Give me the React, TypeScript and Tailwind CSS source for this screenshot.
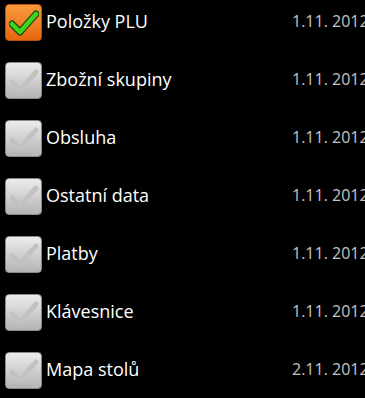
const items = [
  { name: "Položky PLU", date: "1.11. 2012", checked: true },
  { name: "Zbožní skupiny", date: "1.11. 2012", checked: false },
  { name: "Obsluha", date: "1.11. 2012", checked: false },
  { name: "Ostatní data", date: "1.11. 2012", checked: false },
  { name: "Platby", date: "1.11. 2012", checked: false },
  { name: "Klávesnice", date: "1.11. 2012", checked: false },
  { name: "Mapa stolů", date: "2.11. 2012", checked: false },
]

function CheckBox({ checked }: { checked: boolean }) {
  if (checked) {
    return (
      <div className="w-[37px] h-[37px] rounded-[4px] bg-gradient-to-b from-[#f79a3c] to-[#e8650c] border border-[#b8520c] flex items-center justify-center shrink-0">
        <svg width="30" height="26" viewBox="0 0 30 26">
          <path d="M3 14 L11 22 L27 4" fill="none" stroke="#1d4a0c" strokeWidth="7" strokeLinecap="round" strokeLinejoin="round" />
          <path d="M3 14 L11 22 L27 4" fill="none" stroke="#3fd41e" strokeWidth="4.5" strokeLinecap="round" strokeLinejoin="round" />
        </svg>
      </div>
    )
  }
  return (
    <div className="w-[37px] h-[37px] rounded-[4px] bg-gradient-to-b from-[#ececec] to-[#b4b4b4] border border-[#8a8a8a] flex items-center justify-center shrink-0">
      <svg width="30" height="26" viewBox="0 0 30 26">
        <path d="M3 14 L11 22 L27 4" fill="none" stroke="#c2c2c2" strokeWidth="5" strokeLinecap="round" strokeLinejoin="round" />
      </svg>
    </div>
  )
}

export default function App() {
  return (
    <div className="w-[365px] h-[398px] bg-black overflow-hidden" style={{ fontFamily: '"Open Sans", "Noto Sans", sans-serif' }}>
      {items.map((it) => (
        <div key={it.name} className="h-[58px] flex items-start pt-[4px] whitespace-nowrap">
          <div className="w-[292px] flex items-start shrink-0 pl-[5px]">
            <CheckBox checked={it.checked} />
            <span className="ml-[4px] text-[18px] text-white leading-[34px]">{it.name}</span>
          </div>
          <span className="text-[16px] text-[#c4c4c4] leading-[34px]">{it.date}</span>
        </div>
      ))}
    </div>
  )
}
